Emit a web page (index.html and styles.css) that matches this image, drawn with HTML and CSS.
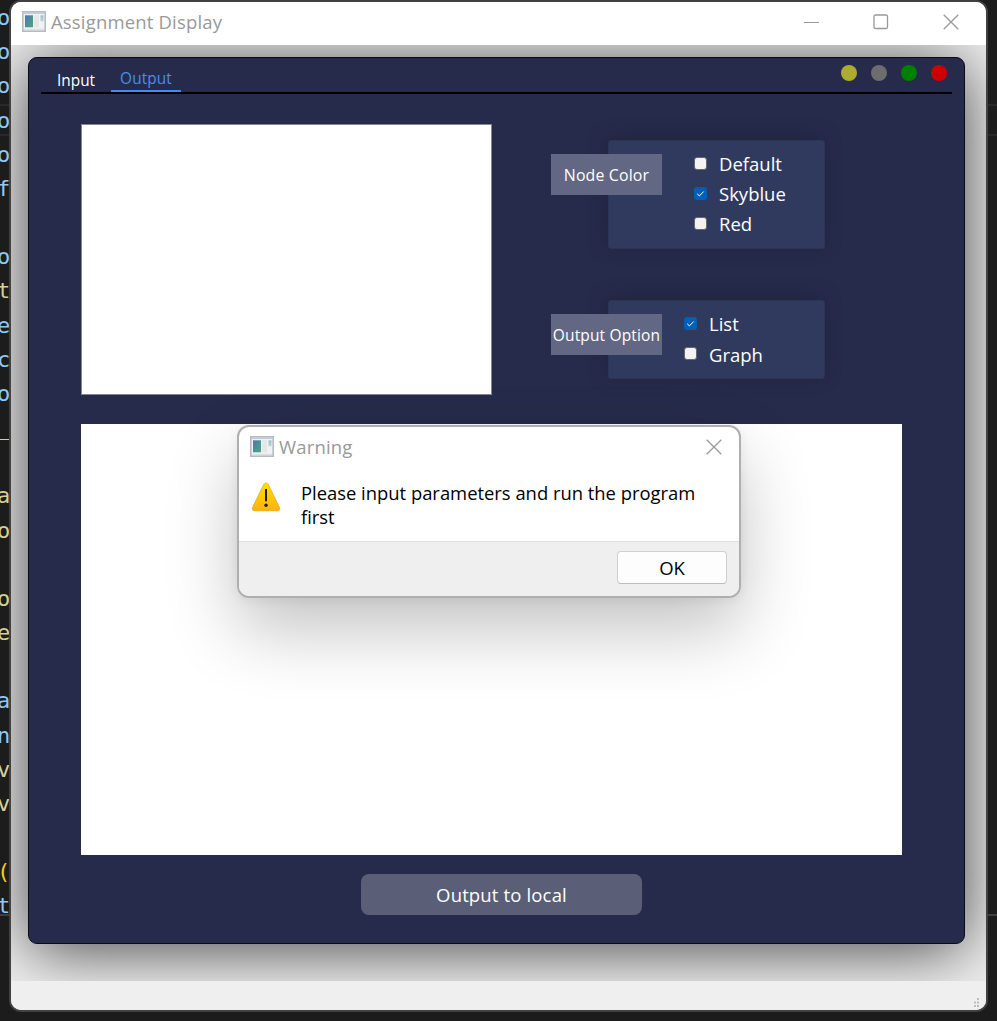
FILE: index.html
```
<!DOCTYPE html>
<html lang="en">
<head>
<meta charset="utf-8">
<title>Assignment Display</title>
<link rel="stylesheet" href="styles.css">
</head>
<body>
<svg class="defs" aria-hidden="true">
  <defs>
    <linearGradient id="pane" x1="0" y1="0" x2="1" y2="1"><stop offset="0" stop-color="#4a7ab0"/><stop offset="1" stop-color="#4fa57e"/></linearGradient>
    <linearGradient id="side" x1="0" y1="0" x2="0" y2="1"><stop offset="0" stop-color="#9dbbd6"/><stop offset="1" stop-color="#b5dac0"/></linearGradient>
    <linearGradient id="warn" x1="0" y1="0" x2="0" y2="1"><stop offset="0" stop-color="#ffe200"/><stop offset="1" stop-color="#ffb211"/></linearGradient>
    <symbol id="app" viewBox="0 0 24 22">
      <rect x=".8" y=".8" width="22.4" height="19.4" fill="#f1f2f3" stroke="#b6bbc0" stroke-width="1.6"/>
      <path d="M1.500 2.200h21" stroke="#c3ccd5" stroke-width="1.400"/>
      <rect x="3" y="4.300" width="8" height="12" fill="url(#pane)"/>
      <rect x="12" y="4.300" width="5" height="12" fill="#e4e6e7"/>
      <rect x="18.500" y="4.300" width="3" height="6" fill="url(#side)"/>
      <path d="M2 18.300h20" stroke="#d9dcde"/>
    </symbol>
    <symbol id="close" viewBox="0 0 16 16"><path d="M.7.7l14.600 14.600M15.300.7L.7 15.300" stroke="#999" stroke-width="1.300" fill="none"/></symbol>
  </defs>
</svg>
<div class="desktop">
  <div class="code">
    <i>o</i><i>o</i><i>o</i><i>o</i><i>o</i><i>f</i><i></i><i>o</i><i class="y">t</i><i>e</i><i>c</i><i>o</i><i class="y">_</i><i></i><i class="y">a</i><i class="y">o</i><i></i><i class="y">o</i><i class="y">e</i><i></i><i>a</i><i>n</i><i class="y">v</i><i class="y">v</i><i></i><i class="g">(</i><i>t</i>
  </div>
  <main class="window">
    <header class="titlebar">
      <svg class="app"><use href="#app"/></svg>
      <span class="title">Assignment Display</span>
      <div class="controls">
        <svg width="16" height="16"><path d="M1 8.500h15" stroke="#999"/></svg>
        <svg width="16" height="16"><rect x="1" y="1" width="13.500" height="13.500" rx="1.500" fill="none" stroke="#999" stroke-width="1.300"/></svg>
        <svg width="16" height="16"><use href="#close"/></svg>
      </div>
    </header>
    <section class="content">
      <div class="panel">
        <nav class="tabs">
          <span class="tab input">Input</span>
          <span class="tab active"><span>Output</span></span>
          <div class="dots"><b class="yellow"></b><b class="gray"></b><b class="green"></b><b class="red"></b></div>
        </nav>
        <div class="top">
          <div class="preview"></div>
          <div class="options">
            <div class="group colors">
              <div class="card">
                <label class="row"><span class="box"></span><span>Default</span></label>
                <label class="row"><span class="box on"><svg viewBox="0 0 13 13"><path d="M3.200 6.800l2.200 2.100 4.300-4.400"/></svg></span><span>Skyblue</span></label>
                <label class="row"><span class="box"></span><span>Red</span></label>
              </div>
              <div class="tag"><span>Node Color</span></div>
            </div>
            <div class="group outputs">
              <div class="card">
                <label class="row"><span class="box on"><svg viewBox="0 0 13 13"><path d="M3.200 6.800l2.200 2.100 4.300-4.400"/></svg></span><span>List</span></label>
                <label class="row"><span class="box"></span><span class="graph">Graph</span></label>
              </div>
              <div class="tag"><span>Output Option</span></div>
            </div>
          </div>
        </div>
        <div class="result"></div>
        <div class="save"><span>Output to local</span></div>
      </div>
    </section>
    <footer class="status">
      <svg width="7" height="10"><path d="M4 1h2M1 4.500h2M4 4.500h2M1 8h2M4 8h2" stroke="#bdbdbd" stroke-width="2"/></svg>
    </footer>
  </main>
  <div class="dialog">
    <header class="dialog-title">
      <svg class="app"><use href="#app"/></svg>
      <span class="title">Warning</span>
      <svg class="x" width="16" height="16"><use href="#close"/></svg>
    </header>
    <div class="message">
      <svg width="30" height="30" viewBox="0 0 30 30">
        <path d="M12.700 2.600Q15-.6 17.300 2.600L28.500 25.500Q29.700 28.700 26.500 28.700H3.500Q.3 28.700 1.500 25.500Z" fill="url(#warn)" stroke="#e8a00c" stroke-width=".7"/>
        <path d="M15 7v12.200" stroke="#1d1a10" stroke-width="2"/><circle cx="15" cy="23.300" r="1.700" fill="#1d1a10"/>
      </svg>
      <p>Please input parameters and run the program<br>first</p>
    </div>
    <footer class="actions"><div class="ok"><span>OK</span></div></footer>
  </div>
</div>
</body>
</html>
```
FILE: styles.css
```
* { box-sizing: border-box; }
body { margin: 0; font-family: "Open Sans", "Noto Sans", sans-serif; }
.defs { position: absolute; width: 0; height: 0; }
.desktop {
  position: relative; width: 997px; height: 1021px; overflow: hidden;
  padding-left: 9px;
  background:
    linear-gradient(#292929, #292929) 0 104px / 100% 2px no-repeat,
    linear-gradient(#292929, #292929) 0 134px / 100% 2px no-repeat,
    linear-gradient(#404040, #404040) 0 914px / 100% 2px no-repeat,
    #1c1c1c;
}
.code { position: absolute; left: -3px; top: 0; width: 14px; }
.code i {
  display: block; height: 34.18px;
  font: normal 22px/35px "DejaVu Sans Mono", monospace; color: #8fc9f5;
}
.code .y { color: #d3d19a; }
.code .g { color: #f0cc10; }

.window {
  position: relative; width: 979px; height: 1012px; display: flex; flex-direction: column;
  border: 2px solid #414141; border-radius: 12px; background: #f0f0f0; overflow: hidden;
}
.titlebar { height: 43px; flex: none; display: flex; align-items: center; background: #fff; padding: 0 27px 3px 11px; }
.app { width: 24px; height: 22px; flex: none; margin-right: 5px; }
.title { font-size: 18.5px; line-height: 24px; color: #999; white-space: nowrap; letter-spacing: .17px; padding-bottom: 1px; }
.controls { margin-left: auto; display: flex; gap: 54px; }
.controls svg { display: block; }
.content { height: 936px; flex: none; padding: 12px 21px 37px 17px; overflow: hidden; }
.panel {
  width: 937px; height: 887px; border: 1px solid #0b0b16; border-radius: 9px; background: #272b4b;
  box-shadow: 0 6px 66px rgba(0,0,0,.73); padding: 0 12px;
  display: flex; flex-direction: column;
}
.tabs { height: 36px; flex: none; border-bottom: 2px solid #000; display: flex; color: #fff; font-size: 15.4px; }
.input { padding: 12px 0 0 16px; width: 70px; line-height: 22px; }
.active { width: 70px; height: 34px; border-bottom: 2px solid #3e8ef0; color: #438fed; text-align: center; line-height: 22px; padding-top: 10px; letter-spacing: .1px; }
.dots { margin-left: auto; padding: 7px 5px 0 0; display: flex; gap: 14px; }
.dots b { width: 16px; height: 16px; border-radius: 50%; }
.yellow { background: #aeab31; }
.gray { background: #6d6d6d; }
.green { background: #008000; }
.red { background: #cf0000; }

.top { display: flex; padding: 30px 0 0 40px; gap: 59px; height: 330px; flex: none; }
.preview { width: 411px; height: 271px; border: 1px solid #828790; background: #fff; flex: none; }
.options { padding-top: 16px; display: flex; flex-direction: column; gap: 51px; }
.group { display: grid; grid-template-columns: 57px 54px 163px; align-items: start; }
.card {
  grid-area: 1 / 2 / 2 / 4; background: #303a5e; border: 1px solid #2d3557; border-radius: 3px;
  box-shadow: -2px -3px 18px rgba(22,26,44,.4);
}
.colors .card { height: 109px; padding: 8px 0 0 85px; }
.outputs .card { height: 79px; padding: 8px 0 0 75px; }
.row { display: flex; align-items: center; height: 30px; color: #fff; font-size: 18.5px; }
.row > span:last-child { margin-left: 12px; padding-bottom: 2px; white-space: nowrap; }
.row > span.graph:last-child { padding-bottom: 0; }
.box { width: 13px; height: 13px; margin-top: -2px; background: #f3f3f3; border: 1px solid #686868; border-radius: 3px; flex: none; }
.box.on { background: #005fb8; border: 0; }
.box svg { display: block; width: 13px; height: 13px; fill: none; stroke: #fff; stroke-width: 1; }
.tag {
  grid-area: 1 / 1 / 2 / 3; margin-top: 14px; height: 41px; background: #626883; color: #fff; z-index: 1;
  display: flex; align-items: center; justify-content: center; font-size: 15.5px; letter-spacing: .15px; white-space: nowrap; padding-top: 1px;
}
.colors .tag { font-size: 15.9px; }
.result { width: 821px; height: 431px; margin-left: 40px; background: #fff; flex: none; }
.save {
  width: 281px; height: 41px; margin: 19px 0 0 320px; border-radius: 8px; background: #5a5e77; color: #fff;
  font-size: 18.5px; letter-spacing: .15px; display: flex; align-items: center; justify-content: center; flex: none;
}
.status { flex: 1; background: #efefef; display: flex; justify-content: flex-end; align-items: flex-end; padding: 0 6px 2px 0; }

.dialog {
  position: absolute; left: 237px; top: 425px; width: 504px; height: 173px;
  border: 2px solid #afafaf; border-radius: 12px; background: #fff; overflow: hidden;
  display: flex; flex-direction: column; box-shadow: 0 32px 70px rgba(0,0,0,.24), 0 2px 12px rgba(0,0,0,.06);
}
.dialog-title { height: 43px; flex: none; display: flex; align-items: center; padding: 0 17px 3px 11px; }
.x { margin-left: auto; }
.message { height: 71px; flex: none; display: flex; padding: 12px 0 0 12px; font-size: 18.4px; color: #000; }
.message p { margin: -1px 0 0 20px; line-height: 24px; white-space: nowrap; }
.message svg { flex: none; }
.actions { flex: 1; background: #efefef; border-top: 1px solid #dfdfdf; display: flex; justify-content: flex-end; padding: 9px 12px 0 0; }
.ok {
  width: 110px; height: 33px; background: #fdfdfd; border: 1px solid #d0d0d0; border-bottom-color: #bcbcbc; border-radius: 4px;
  font-size: 18.5px; display: flex; align-items: center; justify-content: center;
}
```
